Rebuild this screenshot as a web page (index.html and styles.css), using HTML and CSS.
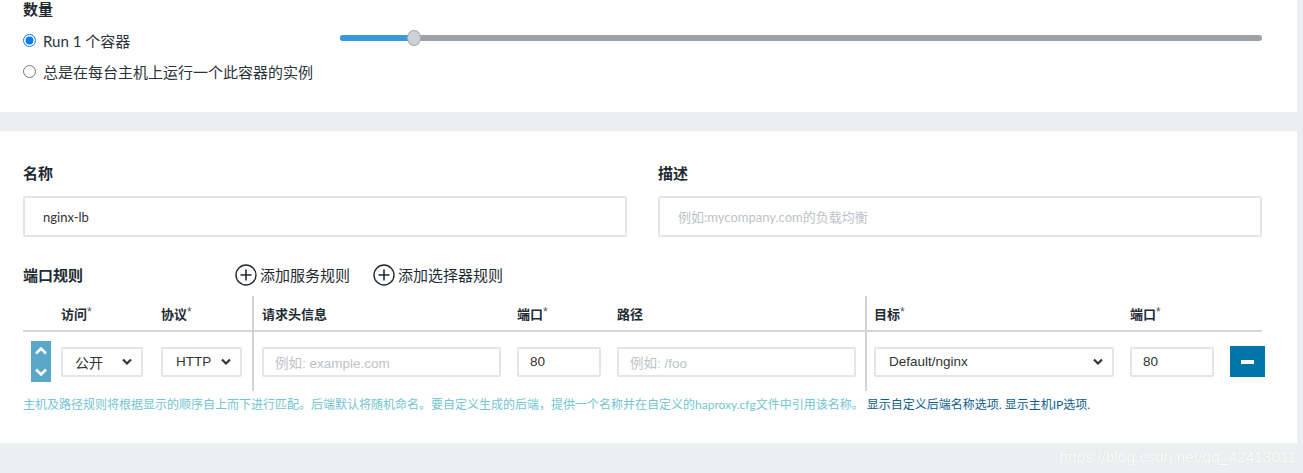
FILE: index.html
```html
<!DOCTYPE html>
<html lang="zh-CN">
<head>
<meta charset="utf-8">
<title>负载均衡</title>
<link rel="stylesheet" href="styles.css">
</head>
<body>
<div class="page">
  <section class="panel scale">
    <div class="scale-left">
      <div class="heading">数量</div>
      <label class="radio-row"><input type="radio" name="scale" checked><span>Run 1 个容器</span></label>
      <label class="radio-row"><input type="radio" name="scale"><span>总是在每台主机上运行一个此容器的实例</span></label>
    </div>
    <div class="scale-right">
      <div class="slider">
        <div class="slider-fill"></div>
        <div class="slider-thumb"></div>
      </div>
    </div>
  </section>

  <section class="panel card">
    <div class="fields">
      <div class="field">
        <div class="label">名称</div>
        <div class="text-input">nginx-lb</div>
      </div>
      <div class="field">
        <div class="label">描述</div>
        <div class="text-input placeholder">例如:mycompany.com的负载均衡</div>
      </div>
    </div>

    <div class="rules-head">
      <div class="label rules-label">端口规则</div>
      <div class="add-btn">
        <svg width="22" height="22" viewBox="0 0 22 22"><circle cx="11" cy="11" r="10" fill="none" stroke="#1f2b33" stroke-width="1.4"/><path d="M11 5.5v11M5.5 11h11" stroke="#1f2b33" stroke-width="1.6"/></svg>
        <span>添加服务规则</span>
      </div>
      <div class="add-btn">
        <svg width="22" height="22" viewBox="0 0 22 22"><circle cx="11" cy="11" r="10" fill="none" stroke="#1f2b33" stroke-width="1.4"/><path d="M11 5.5v11M5.5 11h11" stroke="#1f2b33" stroke-width="1.6"/></svg>
        <span>添加选择器规则</span>
      </div>
    </div>

    <div class="rules">
      <div class="divider d1"></div>
      <div class="divider d2"></div>

      <div class="th"></div>
      <div class="th">访问<span class="req">*</span></div>
      <div class="th">协议<span class="req">*</span></div>
      <div class="th pad">请求头信息</div>
      <div class="th">端口<span class="req">*</span></div>
      <div class="th">路径</div>
      <div class="th pad7">目标<span class="req">*</span></div>
      <div class="th">端口<span class="req">*</span></div>
      <div class="th last"></div>

      <div class="td">
        <div class="mover">
          <svg width="14" height="9" viewBox="0 0 14 9"><path d="M2 7.5L7 2.5l5 5" fill="none" stroke="#fff" stroke-width="2.6"/></svg>
          <svg width="14" height="9" viewBox="0 0 14 9"><path d="M2 1.5l5 5 5-5" fill="none" stroke="#fff" stroke-width="2.6"/></svg>
        </div>
      </div>
      <div class="td">
        <div class="select w82"><span>公开</span><svg class="chev" width="10" height="7" viewBox="0 0 10 7"><path d="M1 1.5l4 4 4-4" fill="none" stroke="#333" stroke-width="2.2"/></svg></div>
      </div>
      <div class="td">
        <div class="select w81 latin"><span>HTTP</span><svg class="chev" width="10" height="7" viewBox="0 0 10 7"><path d="M1 1.5l4 4 4-4" fill="none" stroke="#333" stroke-width="2.2"/></svg></div>
      </div>
      <div class="td pad">
        <div class="cell-input w238 placeholder">例如: example.com</div>
      </div>
      <div class="td">
        <div class="cell-input w83">80</div>
      </div>
      <div class="td">
        <div class="cell-input w238 placeholder">例如: /foo</div>
      </div>
      <div class="td pad7">
        <div class="select w239 latin"><span>Default/nginx</span><svg class="chev" width="10" height="7" viewBox="0 0 10 7"><path d="M1 1.5l4 4 4-4" fill="none" stroke="#333" stroke-width="2.2"/></svg></div>
      </div>
      <div class="td">
        <div class="cell-input w83">80</div>
      </div>
      <div class="td">
        <div class="remove"><span class="bar"></span></div>
      </div>
    </div>

    <p class="help">主机及路径规则将根据显示的顺序自上而下进行匹配。后端默认将随机命名。要自定义生成的后端，提供一个名称并在自定义的haproxy.cfg文件中引用该名称。 <a class="link">显示自定义后端名称选项.</a> <a class="link">显示主机IP选项.</a></p>
  </section>

  <div class="watermark">https://blog.csdn.net/qq_42413011</div>
</div>
</body>
</html>
```

FILE: styles.css
```css
* { box-sizing: border-box; }

html, body {
  margin: 0;
  padding: 0;
}

body {
  background: #ebeff0;
  font-family: Lato, "Noto Sans CJK SC", sans-serif;
  color: #1f2b33;
  width: 1303px;
  height: 473px;
  overflow: hidden;
}

.page {
  position: relative;
  width: 1303px;
  height: 473px;
}

.panel {
  background: #fff;
  width: 1297px;
}

/* ---------- scale panel ---------- */
.scale {
  height: 112px;
  display: grid;
  grid-template-columns: 317px 1fr;
  padding: 0 35px 0 23px;
}

.heading {
  font-size: 15px;
  font-weight: 700;
  line-height: 18px;
  height: 18px;
  margin-bottom: 7px;
}

.radio-row {
  display: flex;
  align-items: center;
  height: 31px;
  font-size: 15px;
  color: #2a333a;
  white-space: nowrap;
}

.radio-row input {
  margin: 0 7px 0 0;
  width: 13px;
  height: 13px;
  accent-color: #0a7cf2;
}

.scale-right {
  padding-top: 35px;
}

.slider {
  position: relative;
  height: 6px;
  border-radius: 3px;
  background: #9ba1a5;
}

.slider-fill {
  width: 74px;
  height: 6px;
  border-radius: 3px 0 0 3px;
  background: #3a99dc;
}

.slider-thumb {
  position: absolute;
  left: 67px;
  top: -5px;
  width: 14px;
  height: 16px;
  border-radius: 50%;
  background: #cdd2d6;
  border: 1px solid #a5abb0;
}

/* ---------- card ---------- */
.card {
  margin-top: 19px;
  height: 312px;
  padding: 32px 35px 0 23px;
}

.fields {
  display: grid;
  grid-template-columns: 604px 604px;
  column-gap: 31px;
}

.label {
  font-size: 15px;
  font-weight: 700;
  line-height: 20px;
}

.field .label {
  margin-bottom: 13px;
}

.text-input {
  height: 41px;
  border: 2px solid #e1e6e7;
  border-radius: 2px;
  padding: 0 18px;
  display: flex;
  align-items: center;
  font-size: 13px;
  color: #333;
}

.text-input.placeholder {
  color: #bcc3c8;
}

.rules-head {
  display: flex;
  align-items: center;
  height: 22px;
  margin-top: 27px;
}

.rules-label {
  width: 212px;
}

.add-btn {
  display: flex;
  align-items: center;
  gap: 3px;
  font-size: 15px;
  color: #1f2b33;
  line-height: 22px;
  margin-right: 23px;
}

.add-btn svg { display: block; }

/* ---------- rules table ---------- */
.rules {
  margin-top: 10px;
  display: grid;
  grid-template-columns: 38px 100px 91px 2px 263px 100px 248px 2px 263px 100px 35px;
  grid-template-rows: 36px 59px;
  width: 1242px;
}

.th {
  font-size: 13px;
  font-weight: 700;
  color: #1f2b33;
  border-bottom: 2px solid #d3d8da;
  display: flex;
  align-items: center;
  white-space: nowrap;
}

.th.last {
  margin-right: 3px;
}

.req {
  font-weight: 400;
  color: #555;
  font-family: "Liberation Sans", sans-serif;
  font-size: 12px;
  align-self: flex-start;
  margin-top: 9px;
}

.pad { padding-left: 8px; }
.pad7 { padding-left: 7px; }

.divider {
  grid-row: 1 / span 2;
  background: #cfd4d6;
}

.d1 { grid-column: 4; }
.d2 { grid-column: 8; }

.td {
  display: flex;
  align-items: center;
}

.mover {
  margin-left: 8px;
  width: 20px;
  height: 41px;
  background: #5aa8c9;
  display: flex;
  flex-direction: column;
  align-items: center;
  justify-content: space-between;
  padding: 5px 0 5px;
}

.mover svg { display: block; }

.select {
  height: 30px;
  border: 2px solid #e1e6e7;
  border-radius: 2px;
  display: flex;
  align-items: center;
  justify-content: space-between;
  padding: 0 9px 0 12px;
  font-size: 14px;
  color: #333;
  white-space: nowrap;
}

.select.latin {
  font-family: "Liberation Sans", "Noto Sans CJK SC", sans-serif;
  font-size: 13.5px;
  padding-left: 13px;
}

.chev { display: block; }

.cell-input {
  height: 30px;
  border: 2px solid #e1e6e7;
  border-radius: 2px;
  display: flex;
  align-items: center;
  padding: 0 11px;
  font-family: "Liberation Sans", "Noto Sans CJK SC", sans-serif;
  font-size: 13.5px;
  color: #333;
  white-space: nowrap;
}

.cell-input.placeholder { color: #bdc3c7; }

.w82 { width: 82px; }
.w81 { width: 81px; }
.w83 { width: 84px; }
.w238 { width: 239px; }
.w239 { width: 240px; }

.remove {
  width: 35px;
  height: 31px;
  background: #0075a8;
  display: flex;
  align-items: center;
  justify-content: center;
}

.remove .bar {
  display: block;
  width: 13px;
  height: 4px;
  background: #fff;
}

.help {
  margin: 5px 0 0;
  font-size: 12px;
  line-height: 18px;
  color: #72c5d1;
  white-space: nowrap;
}

.link {
  color: #0d5d8c;
  text-decoration: none;
}

.watermark {
  position: absolute;
  right: 7px;
  bottom: 7px;
  font-family: "Liberation Sans", sans-serif;
  font-size: 15.5px;
  color: rgba(255, 255, 255, 0.95);
  text-shadow: 0 0 1px rgba(0, 0, 0, 0.12);
}
```
